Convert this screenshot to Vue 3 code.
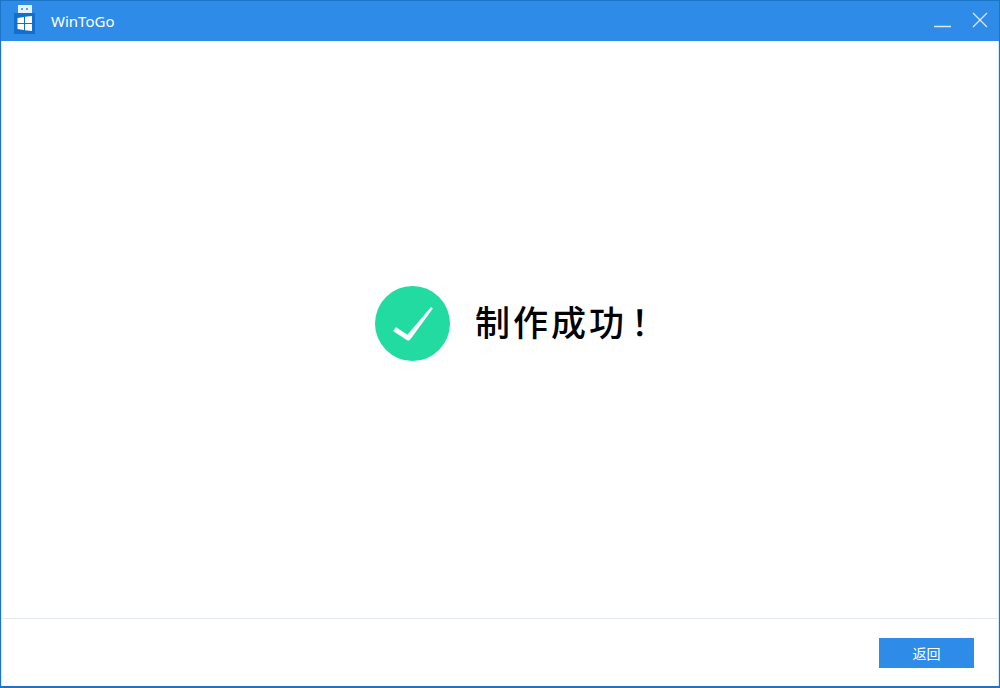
<template>
  <div class="window">
    <header class="titlebar">
      <div class="app-icon">
        <svg width="21" height="29" viewBox="0 0 21 29">
          <rect x="4" y="0" width="14" height="8" fill="#e8f2fc" />
          <rect x="7" y="3" width="2" height="2" fill="#5d9fe0" />
          <rect x="12" y="3" width="2" height="2" fill="#5d9fe0" />
          <rect x="0" y="8" width="21" height="21" fill="#1170cf" />
          <path d="M3.500 13 L10 12 V18 H3.500 Z M11 11.800 L18 11 V18 H11 Z M3.500 19 H10 V25 L3.500 24 Z M11 19 H18 V26 L11 25.200 Z" fill="#fff" />
        </svg>
      </div>
      <span class="app-name">WinToGo</span>
      <div class="controls">
        <svg width="17" height="16" viewBox="0 0 17 16" class="min">
          <path d="M0 14.500 H17" stroke="#d6e8fa" stroke-width="1.500" />
        </svg>
        <svg width="16" height="16" viewBox="0 0 16 16" class="close">
          <path d="M1 1 L15 15 M15 1 L1 15" stroke="#d6e8fa" stroke-width="1.300" fill="none" />
        </svg>
      </div>
    </header>

    <main class="content">
      <div class="result">
        <svg width="75" height="75" viewBox="0 0 75 75">
          <circle cx="37.500" cy="37.500" r="37.500" fill="#22dba0" />
          <path d="M18.500 45 L21 41.500 L32.500 49 L56 21.500 L57.500 22.500 L35 53.500 Q33.500 54.800 31.800 53.800 Z" fill="#fff" stroke="#fff" stroke-width="0.600" stroke-linejoin="round" />
        </svg>
        <span class="message">{{ message }}<span class="mark">！</span></span>
      </div>
    </main>

    <footer class="footer">
      <button class="back">返回</button>
    </footer>
  </div>
</template>

<script setup>
const message = '制作成功'
</script>

<style>
html, body {
  margin: 0;
  background: #fff;
}
</style>

<style scoped>
.window {
  width: 1000px;
  height: 688px;
  box-sizing: border-box;
  border: 1px solid #1b74c6;
  border-bottom-width: 2px;
  display: flex;
  flex-direction: column;
  background: #fff;
  font-family: "Liberation Sans", "Noto Sans CJK SC", sans-serif;
}

.titlebar {
  height: 40px;
  flex: none;
  display: flex;
  align-items: flex-start;
  background: #2e8ce8;
  padding-left: 13px;
  padding-right: 11px;
}

.app-icon {
  width: 21px;
  height: 29px;
  margin-top: 4px;
}

.app-icon svg {
  display: block;
}

.app-name {
  margin-left: 16px;
  margin-top: 9px;
  color: #fff;
  font-size: 15px;
  line-height: 22px;
  font-family: "Noto Sans", "Liberation Sans", sans-serif;
}

.controls {
  margin-left: auto;
  display: flex;
  gap: 21px;
  align-items: flex-start;
}

.min {
  margin-top: 11px;
}

.close {
  margin-top: 11px;
}

.content {
  flex: 1;
  display: flex;
  align-items: flex-start;
  justify-content: flex-start;
  border-left: 1px solid #dbeaf7;
  border-right: 1px solid #dbeaf7;
}

.result {
  margin-top: 245px;
  margin-left: 373px;
  display: flex;
  align-items: center;
  gap: 25px;
}

.result svg {
  display: block;
}

.message {
  font-size: 35px;
  letter-spacing: 3px;
  line-height: 75px;
  margin-top: -6px;
  font-weight: 500;
  color: #000;
  font-family: "Noto Sans CJK SC", sans-serif;
  white-space: nowrap;
}

.mark {
  margin-left: 4px;
}

.footer {
  height: 68px;
  flex: none;
  border-top: 1px solid #e2e8ee;
  border-left: 1px solid #dbeaf7;
  border-right: 1px solid #dbeaf7;
  display: flex;
  justify-content: flex-end;
  align-items: flex-start;
  padding: 19px 24px 0 0;
  box-sizing: border-box;
}

.back {
  width: 95px;
  height: 30px;
  border: none;
  padding: 0;
  background: #2e8ce8;
  color: #fff;
  font-size: 14px;
  font-family: "Noto Sans CJK SC", sans-serif;
}
</style>
